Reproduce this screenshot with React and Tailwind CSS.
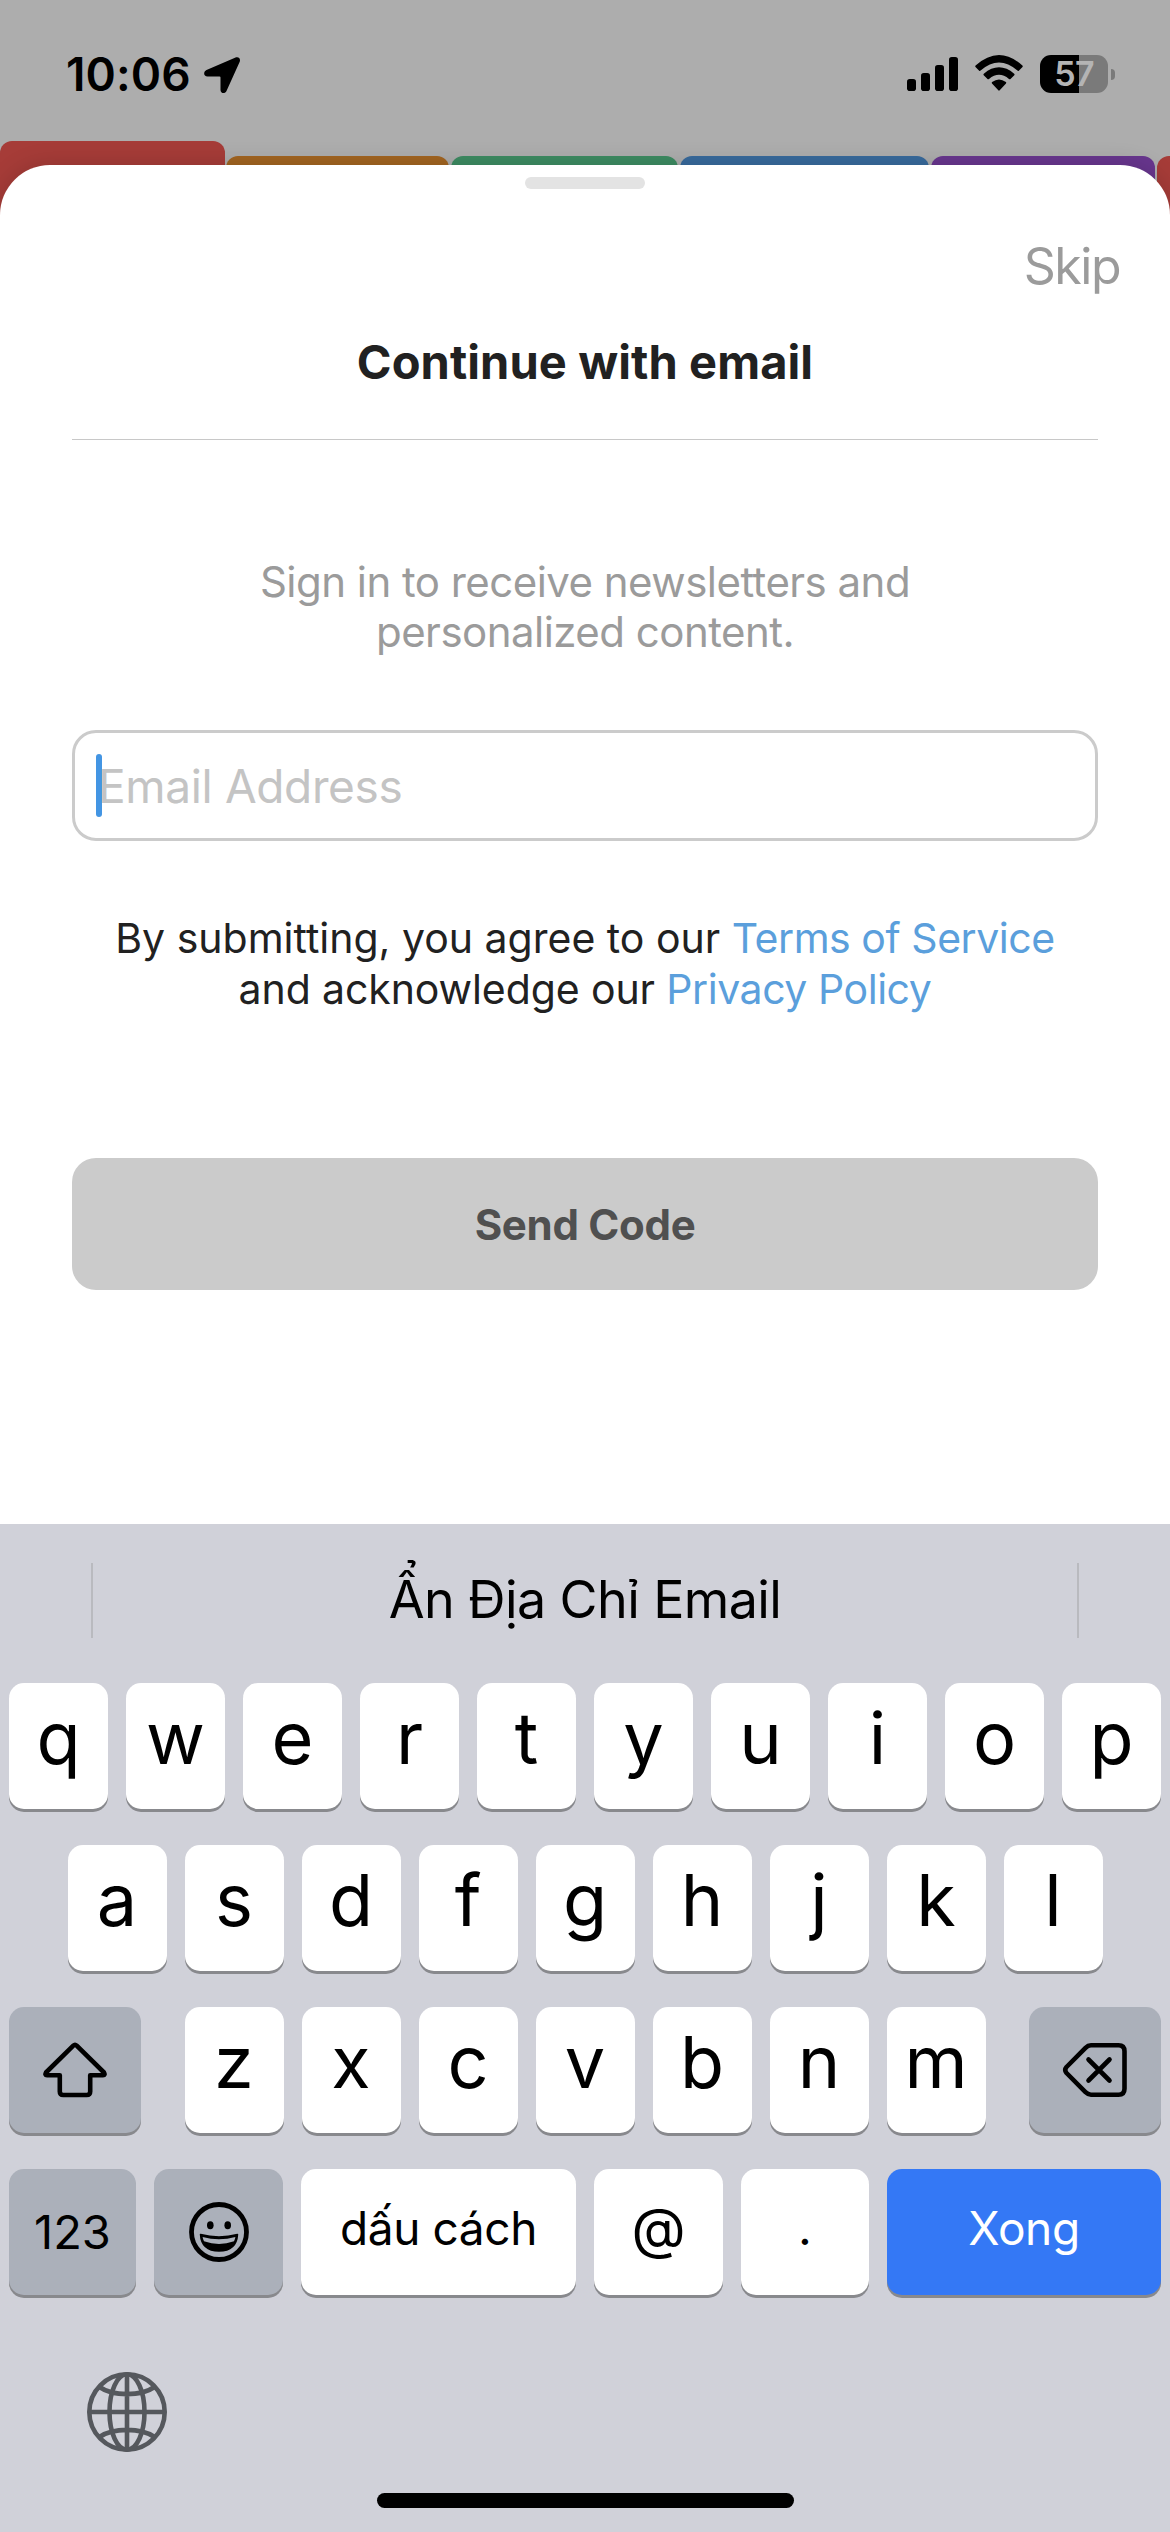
const FONT = "font-['Inter','Liberation_Sans',sans-serif]";

function StatusBar() {
  return (
    <div className="flex h-[141px] items-start justify-between pl-[66px] pr-[55px] pt-[55px]">
      <div className="flex items-start">
        <span className="-mt-[1px] w-[138px] whitespace-nowrap text-[46px] font-semibold leading-[40px] tracking-[0.1px] text-black">10:06</span>
        <svg width="37" height="38" viewBox="0 0 37 38" className="mt-[1px]">
          <path d="M2.500 14 L31 1.800 C34.500 0.300 37 2.500 35.600 6 L22.500 35 C21 38.300 16.500 37.500 16.500 34 L16.500 21.500 Q16.500 20.500 15.500 20.500 L3.500 20.500 C-0.500 20.500 -1 15.700 2.500 14 Z" fill="#000" />
        </svg>
      </div>
      <div className="flex items-start">
        <svg width="51" height="38" viewBox="0 0 51 38">
          <rect x="0" y="24" width="9" height="12" rx="2.800" />
          <rect x="14" y="18" width="9" height="18" rx="2.800" />
          <rect x="28" y="10" width="9" height="26" rx="2.800" />
          <rect x="42" y="2" width="9" height="34" rx="2.800" />
        </svg>
        <svg width="48" height="38" viewBox="0 0 48 38" className="ml-[17px]">
          <path d="M0.600 10.500 Q24 -10.500 47.400 10.500 Q48.200 11.300 47.500 12 L43.800 15.700 Q43.200 16.300 42.400 15.600 Q24 -0.500 5.600 15.600 Q4.800 16.300 4.200 15.700 L0.500 12 Q-0.200 11.300 0.600 10.500 Z" />
          <path d="M8.800 18.700 Q24 6 39.200 18.700 Q40 19.500 39.300 20.200 L35.500 24 Q34.900 24.600 34 23.900 Q24 15.500 14 23.900 Q13.100 24.600 12.500 24 L8.700 20.200 Q8 19.500 8.800 18.700 Z" />
          <path d="M17.100 27 Q24 21.800 30.900 27 Q31.700 27.800 31 28.500 L24.700 35.300 Q24 36 23.300 35.300 L17 28.500 Q16.300 27.800 17.100 27 Z" />
        </svg>
        <div className="ml-[17px] flex h-[38px] w-[68px] items-center justify-center rounded-[11px] bg-[linear-gradient(90deg,#000_58%,#7a7a7a_58%)] text-[34px] font-semibold leading-none tracking-[-0.8px] text-[#b4b4b4]">57</div>
        <div className="ml-[3px] mt-[14px] h-[11px] w-[4px] rounded-r-full bg-[#7a7a7a]" />
      </div>
    </div>
  );
}

function Tabs() {
  return (
    <div className="flex h-[80px] items-end gap-[2px]">
      <div className="-mr-[1px] h-[80px] w-[225px] shrink-0 rounded-t-[12px] bg-[#a63c38]" />
      <div className="h-[65px] w-[223px] shrink-0 rounded-t-[12px] bg-[#a26521]" />
      <div className="h-[65px] w-[227px] shrink-0 rounded-t-[12px] bg-[#3d8b62]" />
      <div className="h-[65px] w-[249px] shrink-0 rounded-t-[12px] bg-[#386a9c]" />
      <div className="h-[65px] w-[224px] shrink-0 rounded-t-[12px] bg-[#68368e]" />
      <div className="h-[65px] w-[40px] shrink-0 rounded-tl-[12px] bg-[#a63c38]" />
    </div>
  );
}

function Key({ children, className = "w-[99px] bg-white" }) {
  return (
    <div className={`flex h-[126px] shrink-0 justify-center rounded-[15px] shadow-[0_3px_0_#88898d] ${className}`}>
      {children}
    </div>
  );
}

function Letter({ c }) {
  return (
    <Key>
      <span className="mt-[7px] text-[72px] font-[370] leading-[96px] text-black">{c}</span>
    </Key>
  );
}

function Keyboard() {
  return (
    <div className="relative z-10 flex h-[1008px] flex-col bg-[#d0d1d9]">
      <div className="flex h-[159px] items-start justify-between pl-[91px] pr-[91px] pt-[39px]">
        <div className="h-[75px] w-[2px] bg-[#b9babf]" />
        <span className="mt-[7px] whitespace-nowrap text-[52px] leading-[60px] tracking-[-0.6px] text-black">Ẩn Địa Chỉ Email</span>
        <div className="h-[75px] w-[2px] bg-[#b9babf]" />
      </div>
      <div className="flex flex-col gap-[36px]">
        <div className="flex justify-center gap-[18px]">
          {"qwertyuiop".split("").map((c) => <Letter key={c} c={c} />)}
        </div>
        <div className="flex justify-center gap-[18px]">
          {"asdfghjkl".split("").map((c) => <Letter key={c} c={c} />)}
        </div>
        <div className="flex justify-between px-[9px]">
          <Key className="w-[132px] items-center bg-[#abb0ba]">
            <svg width="64" height="56" viewBox="0 0 64 56" fill="none" stroke="#000" strokeWidth="4.600" strokeLinejoin="round">
              <path d="M30.300 3.700 Q32 2 33.700 3.700 L61 30.500 Q62.500 33.200 60 33.200 L47.200 33.200 L47.200 49.500 Q47.200 53 43.700 53 L20.300 53 Q16.800 53 16.800 49.500 L16.800 33.200 L4 33.200 Q1.500 33.200 3 30.500 Z" />
            </svg>
          </Key>
          <div className="flex gap-[18px]">
            {"zxcvbnm".split("").map((c) => <Letter key={c} c={c} />)}
          </div>
          <Key className="w-[132px] items-center bg-[#abb0ba]">
            <svg width="66" height="56" viewBox="0 0 66 56" fill="none" stroke="#000" strokeWidth="4.600" strokeLinejoin="round" strokeLinecap="round">
              <path d="M29 3.300 L56.500 3.300 Q62.500 3.300 62.500 9.300 L62.500 46.700 Q62.500 52.700 56.500 52.700 L29 52.700 Q26 52.700 23.500 50.200 L4.500 31 Q2 28 4.500 25 L23.500 5.800 Q26 3.300 29 3.300 Z" />
              <path d="M26.500 17.500 L47.500 38.500 M47.500 17.500 L26.500 38.500" />
            </svg>
          </Key>
        </div>
        <div className="flex gap-[18px] px-[9px]">
          <Key className="w-[127px] bg-[#abb0ba]">
            <span className="mt-[33px] text-[47px] leading-[60px] text-black">123</span>
          </Key>
          <Key className="w-[129px] items-center bg-[#abb0ba]">
            <svg width="60" height="60" viewBox="0 0 60 60">
              <circle cx="30" cy="30" r="27.500" fill="none" stroke="#000" strokeWidth="4.800" />
              <ellipse cx="21.300" cy="23.300" rx="3.300" ry="4" />
              <ellipse cx="38.700" cy="23.300" rx="3.300" ry="4" />
              <path d="M11.500 32.500 Q30 37.500 48.500 32.500 Q47.500 49 30 49 Q12.500 49 11.500 32.500 Z" stroke="#000" strokeWidth="1.500" strokeLinejoin="round" />
              <path d="M13.600 35 Q30 39.500 46.400 35 Q46 37.500 45 39.300 Q30 44.500 15 39.300 Q14 37.500 13.600 35 Z" fill="#abb0ba" />
            </svg>
          </Key>
          <Key className="w-[275px] bg-white">
            <span className="mt-[29px] text-[46px] leading-[60px] tracking-[-0.4px] text-black">dấu cách</span>
          </Key>
          <Key className="w-[129px] bg-white">
            <span className="mt-[29px] text-[56px] leading-[60px] text-black">@</span>
          </Key>
          <Key className="w-[128px] bg-white">
            <span className="mt-[29px] text-[48px] leading-[60px] text-black">.</span>
          </Key>
          <Key className="w-[274px] bg-[#3478f5]">
            <span className="mt-[29px] text-[46px] leading-[60px] tracking-[-0.4px] text-white">Xong</span>
          </Key>
        </div>
      </div>
      <div className="mt-[77px] pl-[87px]">
        <svg width="80" height="80" viewBox="0 0 80 80" fill="none" stroke="#55585d" strokeWidth="4.600">
          <circle cx="40" cy="40" r="37.700" />
          <ellipse cx="40" cy="40" rx="17.500" ry="37.700" />
          <path d="M40 2 V78 M2 40 H78 M12.500 15 C26 24.500 54 24.500 67.500 15 M12.500 65 C26 55.500 54 55.500 67.500 65" />
        </svg>
      </div>
      <div className="mx-auto mt-[41px] h-[15px] w-[417px] rounded-full bg-black" />
    </div>
  );
}

export default function App() {
  return (
    <div className={`flex h-[2532px] w-[1170px] flex-col overflow-hidden bg-[#adadad] ${FONT}`}>
      <StatusBar />
      <Tabs />
      <div className="relative -mt-[56px] flex h-[1359px] flex-col items-center rounded-t-[50px] bg-white px-[72px] shadow-[0_0_24px_rgba(0,0,0,0.16)]">
        <div className="mt-[12px] h-[12px] w-[120px] shrink-0 rounded-full bg-[#e3e3e3]" />
        <div className="-mr-[22px] mt-[45px] self-end text-[50px] leading-[64px] tracking-[-1.5px] text-[#9b9b9b]">Skip</div>
        <h1 className="mt-[31px] whitespace-nowrap text-[47px] font-bold leading-[66px] tracking-[0.1px] text-[#212121]">Continue with email</h1>
        <div className="mt-[44px] h-px w-full bg-[#c8c8c8]" />
        <p className="mt-[117px] text-center text-[42px] leading-[50px] tracking-[-0.53px] text-[#9b9b9b]">
          Sign in to receive newsletters and
          <br />
          personalized content.
        </p>
        <div className="mt-[73px] flex h-[111px] w-full items-center rounded-[24px] border-[3px] border-[#cbcbcb] pl-[21px]">
          <div className="h-[63px] w-[6px] rounded-full bg-[#4395e3]" />
          <span className="-ml-[4px] text-[46px] leading-[60px] tracking-[-0.35px] text-[#c4c4c4]">Email Address</span>
        </div>
        <p className="mt-[72px] whitespace-nowrap text-center text-[41px] leading-[51px] text-[#212121]">
          By submitting, you agree to our <span className="tracking-[-0.45px] text-[#5b9fdc]">Terms of Service</span>
          <br />
          <span className="tracking-[-0.1px]">and acknowledge our </span>
          <span className="tracking-[-0.45px] text-[#5b9fdc]">Privacy Policy</span>
        </p>
        <div className="mt-[143px] flex h-[132px] w-full items-center justify-center rounded-[24px] bg-[#cbcbcb] text-[42px] font-bold tracking-[-0.3px] text-[#505050]">Send Code</div>
      </div>
      <Keyboard />
    </div>
  );
}
